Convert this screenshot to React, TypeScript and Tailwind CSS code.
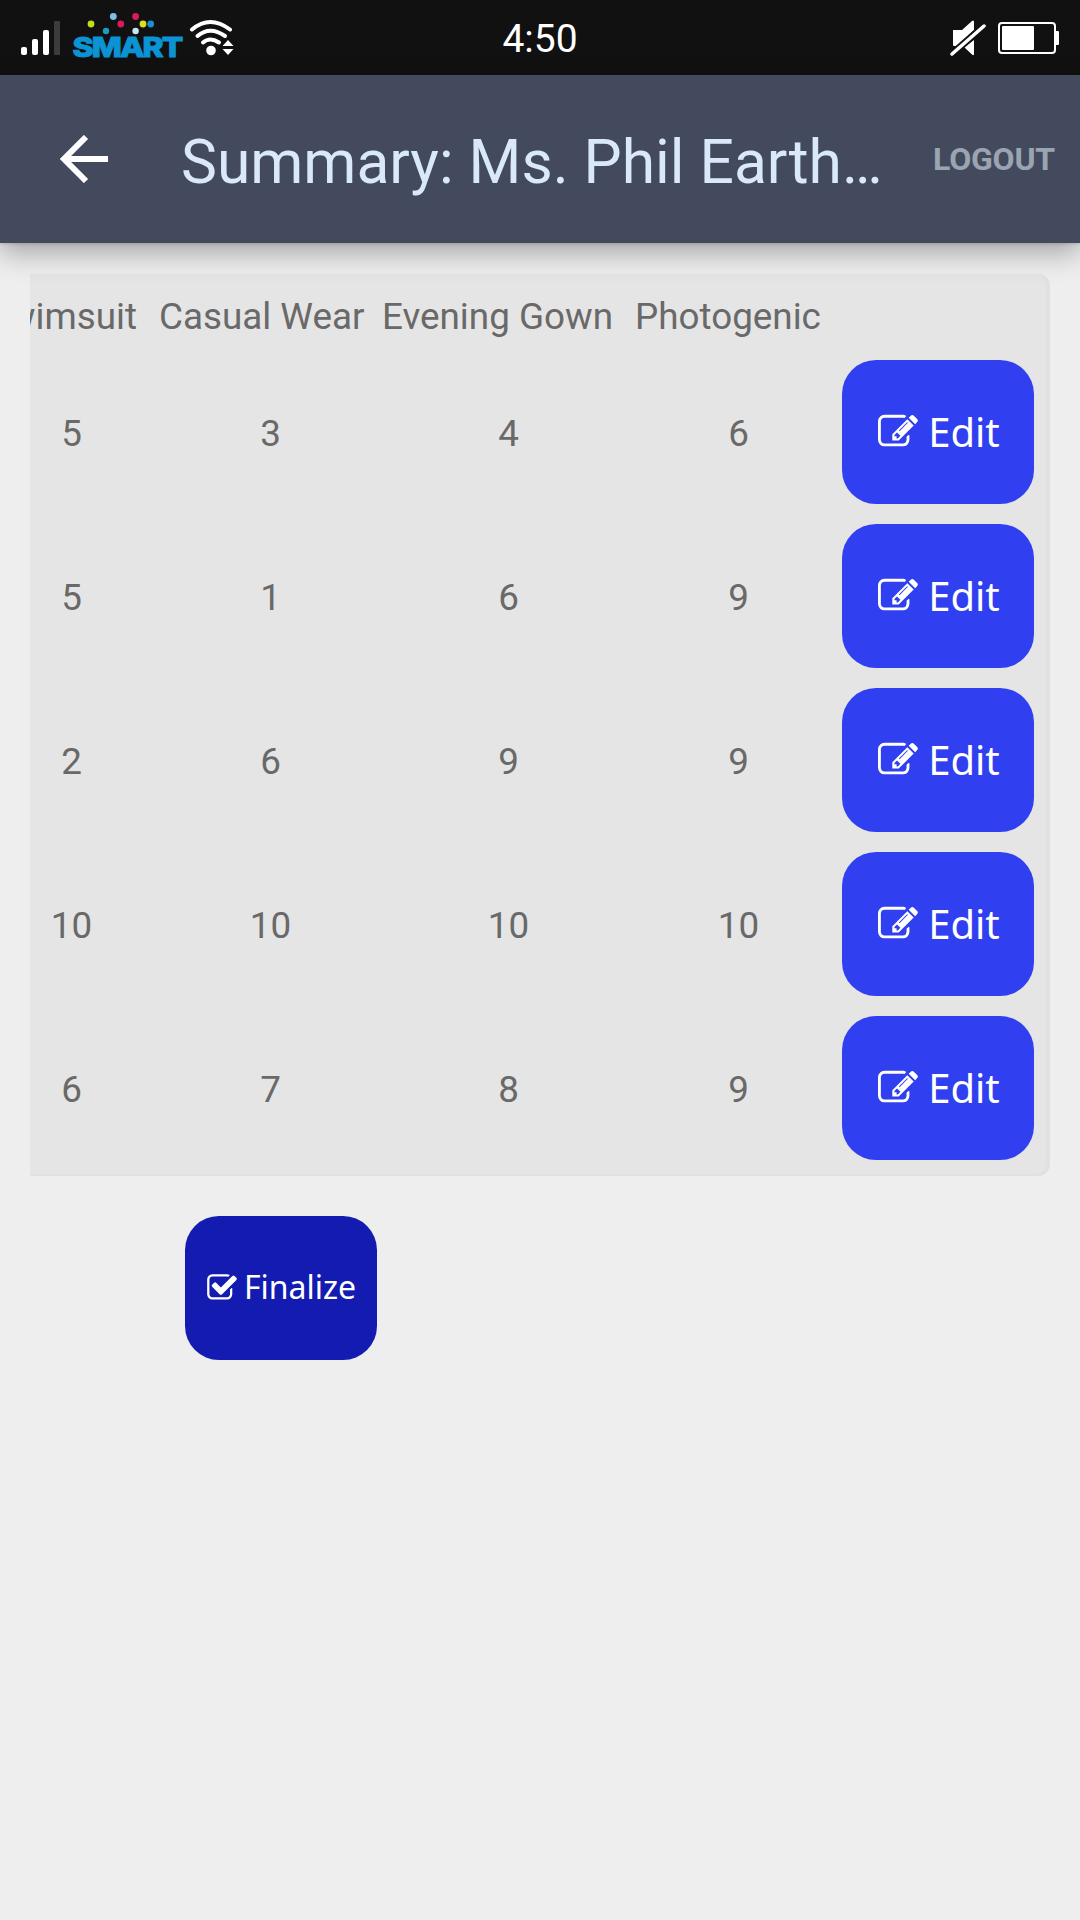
import React from "react";

const headers = ["Swimsuit", "Casual Wear", "Evening Gown", "Photogenic"];
const rows = [
  [5, 3, 4, 6],
  [5, 1, 6, 9],
  [2, 6, 9, 9],
  [10, 10, 10, 10],
  [6, 7, 8, 9],
];

function Signal() {
  return (
    <svg className="shrink-0" width="40" height="36" viewBox="0 0 40 36">
      <rect x="0" y="27" width="6" height="8" rx="2" fill="#fff" />
      <rect x="11" y="19" width="6" height="16" rx="2" fill="#fff" />
      <rect x="22" y="10" width="6" height="25" rx="2" fill="#fff" />
      <rect x="33" y="1" width="6" height="34" rx="1" fill="#3c3c3c" />
    </svg>
  );
}

function SmartLogo() {
  return (
    <svg className="shrink-0 overflow-visible" width="112" height="50" viewBox="0 0 112 50">
      <circle cx="18" cy="14" r="3.4" fill="#c5dc1c" />
      <circle cx="40.300" cy="6.500" r="3.4" fill="#7dbde8" />
      <circle cx="47.800" cy="14" r="3.4" fill="#d81b5b" />
      <circle cx="33" cy="21" r="3.2" fill="#1a9cc4" />
      <circle cx="62.600" cy="6.500" r="3.4" fill="#d81b5b" />
      <circle cx="70" cy="14" r="3.4" fill="#dbe01c" />
      <circle cx="77.700" cy="14" r="3.4" fill="#1a8fcd" />
      <circle cx="62.600" cy="21" r="3.2" fill="#c4e8f0" />
      <text x="-0.500" y="47" textLength="109" lengthAdjust="spacingAndGlyphs" letterSpacing="-1.6" fontFamily="Inter" fontWeight="800" fontSize="27.500" fill="#0c93d4" stroke="#0c93d4" strokeWidth="1">SMART</text>
    </svg>
  );
}

function Wifi() {
  return (
    <svg className="shrink-0" width="46" height="38" viewBox="0 0 46 38">
      <g fill="none" stroke="#fff" strokeWidth="4" strokeLinecap="round">
        <path d="M3 10.500Q21 -4.500 41 10.500" />
        <path d="M8.500 17Q21 6.500 36 17" />
        <path d="M14 23.500Q21 17.500 30 23.500" />
      </g>
      <circle cx="22" cy="31.500" r="4.8" fill="#fff" />
      <path d="M33.500 27l5.500-6 5.500 6zM33.500 30h11l-5.500 6z" fill="#fff" />
    </svg>
  );
}

function Muted() {
  return (
    <svg className="shrink-0" width="37" height="38" viewBox="0 0 37 38">
      <path d="M3 11h9L22 2q2-1.500 2 1v8L7 27H4q-1 0-1-1zM24 21v14q0 2-2 .5L14 28z" fill="#fff" />
      <path d="M2 35L34 7" stroke="#111111" strokeWidth="7" />
      <path d="M2 35L34 7" stroke="#fff" strokeWidth="3.500" strokeLinecap="round" />
    </svg>
  );
}

function Battery() {
  return (
    <svg className="shrink-0" width="62" height="34" viewBox="0 0 62 34">
      <rect x="1" y="2" width="56" height="30" rx="3" fill="none" stroke="#fff" strokeWidth="2" />
      <rect x="4" y="5" width="32" height="24" rx="1" fill="#fff" />
      <path d="M58 10h2q1 0 1 1v12q0 1-1 1h-2z" fill="#fff" />
    </svg>
  );
}

function EditIcon() {
  return (
    <svg className="size-10 shrink-0" viewBox="0 0 1792 1792" fill="currentColor">
      <path d="M888 1184l116-116-152-152-116 116v56h96v96h56zm440-720q-16-16-33 1l-350 350q-17 17-1 33t33-1l350-350q17-17 1-33zm80 594v190q0 119-84.5 203.5t-203.5 84.5h-832q-119 0-203.5-84.5t-84.5-203.5v-832q0-119 84.5-203.5t203.5-84.5h832q63 0 117 25 15 7 18 23 3 17-9 29l-49 49q-14 14-32 8-23-6-45-6h-832q-66 0-113 47t-47 113v832q0 66 47 113t113 47h832q66 0 113-47t47-113v-126q0-13 9-22l64-64q15-15 35-7t20 29zm-96-738l288 288-672 672h-288v-288zm444 132l-92 92-288-288 92-92q28-28 68-28t68 28l152 152q28 28 28 68t-28 68z" />
    </svg>
  );
}

function CheckIcon() {
  return (
    <svg className="size-8 shrink-0" viewBox="0 0 1792 1792" fill="currentColor">
      <path d="M1472 930v318q0 119-84.5 203.5t-203.5 84.5h-832q-119 0-203.5-84.5t-84.5-203.5v-832q0-119 84.5-203.5t203.5-84.5h832q63 0 117 25 15 7 18 23 3 17-9 29l-49 49q-10 10-23 10-3 0-9-2-23-6-45-6h-832q-66 0-113 47t-47 113v832q0 66 47 113t113 47h832q66 0 113-47t47-113v-254q0-13 9-22l64-64q10-10 23-10 6 0 12 3 20 8 20 29zm231-489l-814 814q-24 24-57 24t-57-24l-430-430q-24-24-24-57t24-57l110-110q24-24 57-24t57 24l263 263 647-647q24-24 57-24t57 24l110 110q24 24 24 57t-24 57z" />
    </svg>
  );
}

export default function App() {
  return (
    <div className="flex h-[1920px] w-[1080px] flex-col overflow-hidden bg-[#eeeeee] font-['Roboto',sans-serif]">
      <div className="grid h-[75px] shrink-0 grid-cols-3 items-center bg-[#111111] text-white">
        <div className="flex items-center pl-[21px]">
          <Signal />
          <div className="ml-3 flex h-[56px]"><SmartLogo /></div>
          <div className="ml-1"><Wifi /></div>
        </div>
        <div className="pt-[3px] text-center text-[39px] leading-none">4:50</div>
        <div className="flex items-center justify-end gap-[11px] pr-[20px]">
          <Muted />
          <Battery />
        </div>
      </div>

      <header className="relative z-10 flex h-[168px] shrink-0 items-center bg-[#434a5e] pr-[25px] pl-[60px] shadow-[0_1px_3px_rgba(0,0,0,0.15),0_10px_26px_rgba(0,0,0,0.3)]">
        <svg className="shrink-0" width="48" height="48" viewBox="0 0 48 48" fill="none" stroke="#fff" strokeWidth="6">
          <path d="M48 24H6M26 2L4 24l22 22" />
        </svg>
        <h1 className="ml-[73px] pt-[8px] whitespace-nowrap text-[60.5px] leading-none text-[#d9e8fa]">Summary: Ms. Phil Earth…</h1>
        <button className="ml-auto text-[32px] leading-none font-bold tracking-[-0.2px] text-[#9ba4b1]">LOGOUT</button>
      </header>

      <main className="flex flex-col items-start pt-[31px] pl-[30px]">
        <section className="flex h-[902px] w-[1020px] justify-end overflow-hidden rounded-r-xl border-r-4 border-b-2 border-[#e1e1e1] bg-[#e5e5e5] pr-[12px] text-[36.8px] text-[#696969]">
          <div className="shrink-0">
            <div className="grid h-[86px] grid-cols-[175px_223px_253px_207px_192px] items-center leading-none">
              {headers.map((h) => (
                <div key={h} className="whitespace-nowrap first:pl-[2px]">{h}</div>
              ))}
            </div>
            <div className="flex flex-col gap-5">
              {rows.map((r, i) => (
                <div key={i} className="grid h-36 grid-cols-[175px_223px_253px_207px_192px] items-center text-center leading-none">
                  {r.map((v, j) => (
                    <div key={j} className="pt-[5px]">{v}</div>
                  ))}
                  <button className="flex h-36 items-center justify-center rounded-[34px] bg-[#303ff0] pl-[2px] font-['Noto_Sans',sans-serif] text-[40px] leading-none text-white">
                    <EditIcon />
                    <span className="ml-[10px] pb-px">Edit</span>
                  </button>
                </div>
              ))}
            </div>
          </div>
        </section>
        <button className="mt-[40px] ml-[155px] flex h-36 w-48 items-center justify-center rounded-[34px] bg-[#131bb0] font-['Noto_Sans',sans-serif] text-[32px] leading-none text-white">
          <CheckIcon />
          <span className="ml-[6px] pb-[2px]">Finalize</span>
        </button>
      </main>
    </div>
  );
}
